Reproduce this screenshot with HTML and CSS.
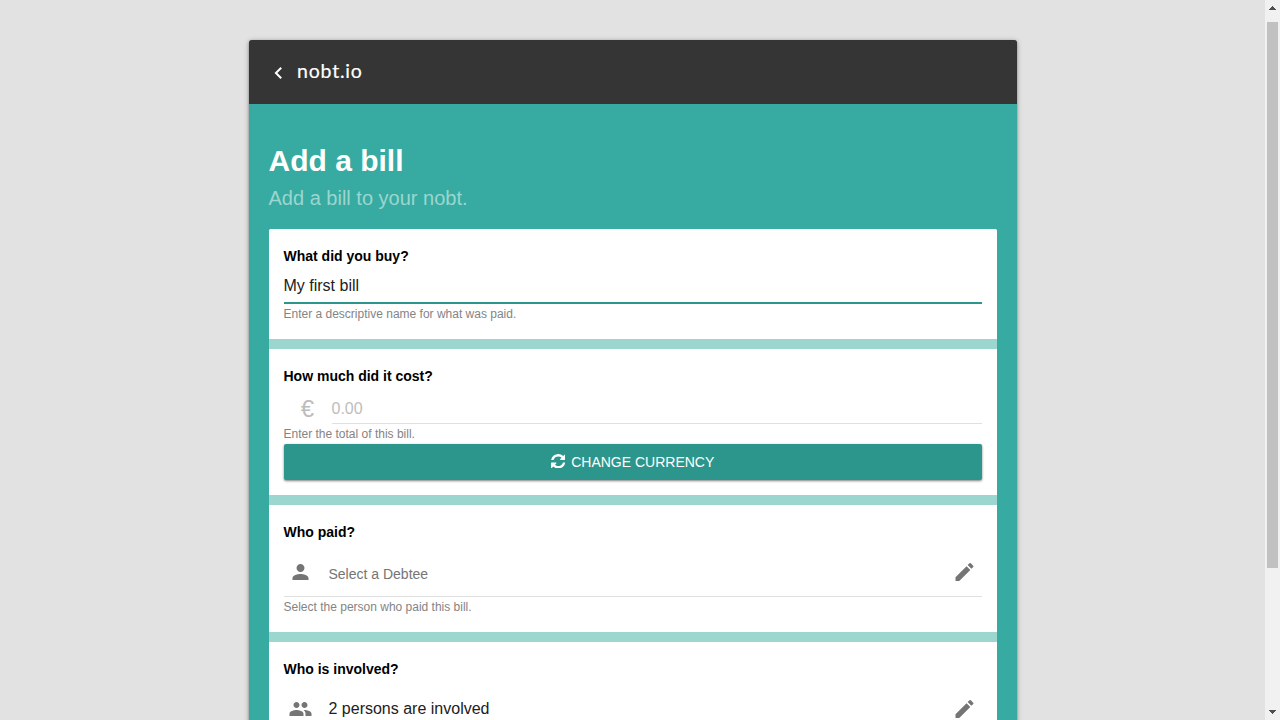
FILE: index.html
```html
<!DOCTYPE html>
<html lang="en">
<head>
<meta charset="utf-8">
<title>nobt.io</title>
<link rel="stylesheet" href="styles.css">
</head>
<body>
<div class="viewport">
  <div class="page">
    <div class="app">
      <header class="bar">
        <svg class="back" viewBox="-.5 0 24 24"><path d="M15.41 7.41L14 6l-6 6 6 6 1.41-1.41L10.83 12z"/></svg>
        <span class="logo">nobt.io</span>
      </header>
      <main class="content">
        <h1 class="title">Add a bill</h1>
        <p class="subtitle">Add a bill to your nobt.</p>
        <div class="sections">
          <section class="section section-name">
            <h2 class="label">What did you buy?</h2>
            <div class="field field-active">My first bill</div>
            <p class="hint">Enter a descriptive name for what was paid.</p>
          </section>
          <section class="section section-cost">
            <h2 class="label">How much did it cost?</h2>
            <div class="amount">
              <span class="currency">€</span>
              <div class="field field-amount">0.00</div>
            </div>
            <p class="hint">Enter the total of this bill.</p>
            <div class="button">
              <svg class="refresh" viewBox="0 0 1536 1536"><path d="M1511 928q0 5-1 7-64 268-268 434.500T764 1536q-146 0-282.500-55T238 1324l-129 129q-19 19-45 19t-45-19-19-45V960q0-26 19-45t45-19h448q26 0 45 19t19 45-19 45l-137 137q71 66 161 102t187 36q134 0 250-65t186-179q11-17 53-117 8-23 30-23h192q13 0 22.500 9.500t9.500 22.500zm25-800v448q0 26-19 45t-45 19h-448q-26 0-45-19t-19-45 19-45l138-138Q969 256 768 256q-134 0-250 65T332 500q-11 17-53 117-8 23-30 23H50q-13 0-22.500-9.500T18 608v-7q65-268 270-434.500T768 0q146 0 284 55.500T1297 212l130-129q19-19 45-19t45 19 19 45z"/></svg>
              <span>CHANGE CURRENCY</span>
            </div>
          </section>
          <section class="section section-payer">
            <h2 class="label">Who paid?</h2>
            <div class="picker">
              <svg class="icon" viewBox="-.5 0 24 24"><path d="M12 12c2.210 0 4-1.790 4-4s-1.790-4-4-4-4 1.790-4 4 1.790 4 4 4zm0 2c-2.670 0-8 1.340-8 4v2h16v-2c0-2.660-5.330-4-8-4z"/></svg>
              <span class="value value-empty">Select a Debtee</span>
              <svg class="icon edit" viewBox="-.5 0 24 24"><path d="M3 17.250V21h3.750L17.810 9.940l-3.750-3.750L3 17.250zM20.710 7.040a1 1 0 0 0 0-1.410l-2.340-2.340a1 1 0 0 0-1.410 0l-1.830 1.830 3.750 3.750 1.830-1.830z"/></svg>
            </div>
            <p class="hint">Select the person who paid this bill.</p>
          </section>
          <section class="section">
            <h2 class="label">Who is involved?</h2>
            <div class="picker">
              <svg class="icon" viewBox="-.5 0 24 24"><path d="M16 11c1.660 0 2.990-1.340 2.990-3S17.660 5 16 5s-3 1.340-3 3 1.340 3 3 3zm-8 0c1.660 0 2.990-1.340 2.990-3S9.660 5 8 5 5 6.340 5 8s1.340 3 3 3zm0 2c-2.330 0-7 1.170-7 3.500V19h14v-2.500C15 14.170 10.330 13 8 13zm8 0c-.290 0-.620.020-.970.050 1.160.840 1.970 1.970 1.970 3.450V19h6v-2.500c0-2.330-4.670-3.500-7-3.500z"/></svg>
              <span class="value">2 persons are involved</span>
              <svg class="icon edit" viewBox="-.5 0 24 24"><path d="M3 17.250V21h3.750L17.810 9.940l-3.750-3.750L3 17.250zM20.710 7.040a1 1 0 0 0 0-1.410l-2.340-2.340a1 1 0 0 0-1.410 0l-1.830 1.830 3.750 3.750 1.830-1.830z"/></svg>
            </div>
          </section>
        </div>
      </main>
    </div>
  </div>
  <div class="scrollbar">
    <svg class="arrow" viewBox="0 0 15 22" shape-rendering="crispEdges"><path d="M7 6h1v1h1v1h1v1h1v1H4V9h1V8h1V7h1z"/></svg>
    <div class="thumb"></div>
    <svg class="arrow arrow-down" viewBox="0 0 15 15" shape-rendering="crispEdges"><path d="M4 5h7v1h-1v1H9v1H8v1H7V8H6V7H5V6H4z"/></svg>
  </div>
</div>
</body>
</html>
```

FILE: styles.css
```css
* {
  box-sizing: border-box;
}

body {
  margin: 0;
  overflow: hidden;
  font-family: "Liberation Sans", Arial, sans-serif;
  color: #212121;
}

h1, h2, p {
  margin: 0;
}

.viewport {
  display: flex;
  height: 720px;
  overflow: hidden;
}

.page {
  width: 1265px;
  height: 720px;
  padding-top: 40px;
  overflow: hidden;
  background: #e2e2e2;
}

.app {
  width: 768px;
  height: 900px;
  margin: 0 auto;
  border-radius: 3px;
  overflow: hidden;
  background: #37aba1;
  box-shadow: 0 1px 5px rgba(0, 0, 0, .35), 0 1px 2px rgba(0, 0, 0, .25);
}

.bar {
  display: flex;
  align-items: center;
  height: 64px;
  padding-left: 17.5px;
  background: #353535;
  color: #fff;
}

.back {
  width: 24px;
  height: 24px;
  margin-top: 2px;
  fill: #fff;
}

.logo {
  margin: 0 0 2px 7px;
  font: 400 19.5px/24px Lato, sans-serif;
  letter-spacing: .8px;
  -webkit-text-stroke: .2px #fff;
}

.content {
  padding: 36px 20px 0;
}

.title {
  font-size: 30px;
  line-height: 42px;
  color: #fff;
}

.subtitle {
  height: 47px;
  font-size: 20px;
  line-height: 32px;
  color: #9bd6cf;
}

.sections {
  display: flex;
  flex-direction: column;
  gap: 10px;
  border-radius: 2px;
  overflow: hidden;
  background: #9bd6cf;
}

.section {
  padding: 15px;
  background: #fff;
}

.section-name {
  height: 110px;
}

.section-cost {
  height: 146px;
}

.section-payer {
  height: 127px;
}

.label {
  height: 25px;
  font-size: 14px;
  line-height: 24px;
  color: #000;
}

.field {
  font-size: 16px;
}

.field-active {
  height: 35px;
  line-height: 34px;
  border-bottom: 2px solid #2c968d;
}

.amount {
  display: flex;
  height: 35px;
}

.currency {
  width: 48px;
  line-height: 40px;
  text-align: center;
  font-size: 24px;
  color: #bdbdbd;
}

.field-amount {
  flex: 1;
  line-height: 39px;
  color: #bdbdbd;
  border-bottom: 1px solid #e0e0e0;
}

.hint {
  height: 20px;
  font-size: 12px;
  line-height: 20px;
  color: #848484;
}

.button {
  display: flex;
  align-items: center;
  justify-content: center;
  height: 36px;
  border-radius: 2px;
  background: #2c968d;
  color: #fff;
  font-size: 14px;
  box-shadow: 0 1px 3px rgba(0, 0, 0, .25), 0 1px 2px rgba(0, 0, 0, .3);
}

.refresh {
  width: 14.5px;
  height: 14.5px;
  margin: 0 6px 2px 0;
  fill: #fff;
}

.picker {
  display: flex;
  align-items: center;
  height: 52px;
  padding: 2px 5.5px 0 4.5px;
  border-bottom: 1px solid #e0e0e0;
}

.icon {
  width: 24px;
  height: 24px;
  fill: #757575;
}

.value {
  flex: 1;
  margin-left: 16.5px;
  font-size: 16px;
}

.value-empty {
  padding-top: 4px;
  font-size: 14px;
  color: #757575;
}

.scrollbar {
  display: flex;
  flex-direction: column;
  width: 15px;
  height: 720px;
  background: #f1f1f1;
}

.arrow {
  width: 15px;
  height: 22px;
  fill: #505050;
}

.thumb {
  width: 11px;
  height: 546px;
  margin-left: 2px;
  background: #c1c1c1;
}

.arrow-down {
  height: 15px;
  margin-top: auto;
}
```
